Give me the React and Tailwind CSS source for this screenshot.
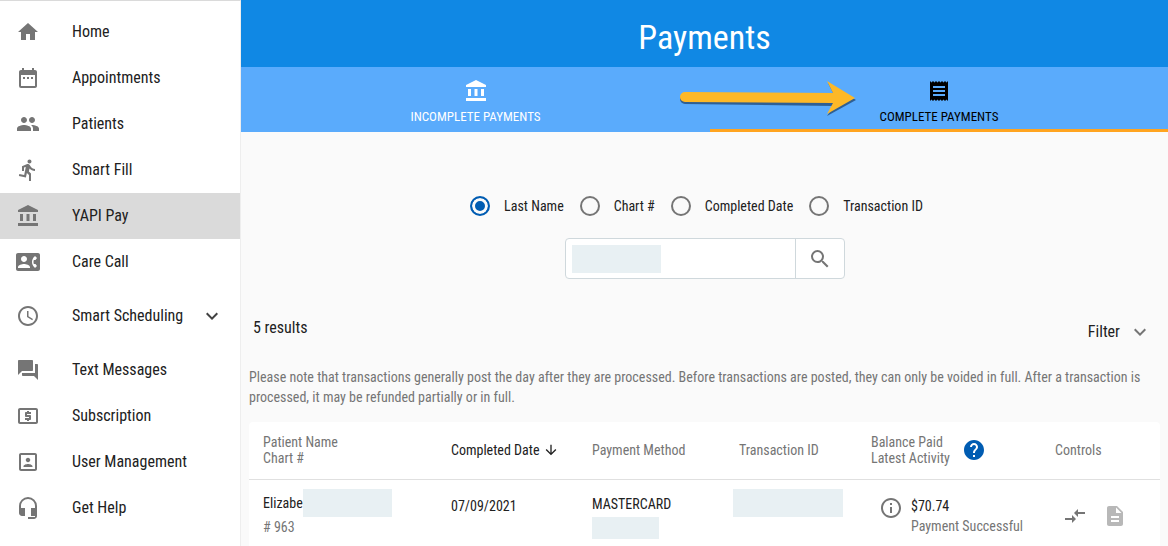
import React, { useState } from 'react'
import {
    MdHome, MdDateRange, MdPeople, MdDirectionsRun, MdAccountBalance, MdContactPhone, MdSchedule,
    MdForum, MdLocalAtm, MdPortrait, MdHeadsetMic, MdExpandMore, MdReceipt, MdSearch,
    MdArrowDownward, MdHelp, MdInfoOutline, MdCompareArrows, MdDescription
} from 'react-icons/md'

const menu = [
    { label: "Home", Icon: MdHome },
    { label: "Appointments", Icon: MdDateRange },
    { label: "Patients", Icon: MdPeople },
    { label: "Smart Fill", Icon: MdDirectionsRun },
    { label: "YAPI Pay", Icon: MdAccountBalance, active: true },
    { label: "Care Call", Icon: MdContactPhone },
    { label: "Smart Scheduling", Icon: MdSchedule, expandable: true },
    { label: "Text Messages", Icon: MdForum },
    { label: "Subscription", Icon: MdLocalAtm },
    { label: "User Management", Icon: MdPortrait },
    { label: "Get Help", Icon: MdHeadsetMic }
]

const searchFields = ["Last Name", "Chart #", "Completed Date", "Transaction ID"]

const MenuItem = ({label, Icon, active, expandable}) => {
    return (
        <li>
            <a href="#" className={`flex items-center pl-4 pr-4 text-base text-[#212121] ${expandable ? "h-[62px]" : "h-[46px]"} ${active ? "bg-[#dadada]" : ""}`}>
                <Icon className="size-6 shrink-0 text-[#757575]" />
                <span className="ml-8">{label}</span>
                {expandable ? <MdExpandMore className="ml-auto size-6 text-[#424242]" /> : null}
            </a>
        </li>
    )
}

const Sidebar = () => {
    return (
        <nav className="w-[241px] shrink-0 border-t border-r border-t-[#dadada] border-r-[#eeeeee] bg-white pt-2">
            <ul>
                {menu.map((item) => <MenuItem key={item.label} {...item} />)}
            </ul>
        </nav>
    )
}

const PointerArrow = () => {
    return (
        <svg className="absolute top-2 -left-8 h-12 w-[184px]" viewBox="0 0 184 48" aria-hidden="true">
            <path d="M7 19 L156 20 L150 8 L178 25 L149 41 L156 31 L7 29 A5 5 0 0 1 7 19 Z" fill="#1d3f66" opacity="0.7" />
            <path d="M7 17 L155 18 L149 6 L177 23 L149 39 L155 28 L7 27 A5 5 0 0 1 7 17 Z" fill="#fdb827" />
        </svg>
    )
}

const Tabs = () => {
    return (
        <div className="flex h-[65px] bg-[#5aabfc] text-[13px] leading-5">
            <button className="flex flex-[469] flex-col items-center pt-3 text-white">
                <MdAccountBalance className="size-6" />
                <span className="mt-1">INCOMPLETE PAYMENTS</span>
            </button>
            <button className="relative flex flex-[458] flex-col items-center border-b-3 border-[#ffa41f] pt-3 text-black">
                <PointerArrow />
                <MdReceipt className="size-6" />
                <span className="mt-1">COMPLETE PAYMENTS</span>
            </button>
        </div>
    )
}

// covers private patient data
const Hidden = ({className}) => <div className={`bg-[#e8f0f3] ${className}`} />

const Search = () => {
    const [field, setField] = useState("Last Name")
    const [query, setQuery] = useState("")

    return (
        <form onSubmit={(e) => e.preventDefault()} className="flex flex-col items-center pt-16">
            <div className="flex">
                {searchFields.map((name) => (
                    <label key={name} className="mr-4 flex items-center gap-3.5 text-sm text-[#212121]">
                        <input
                            type="radio"
                            name="field"
                            value={name}
                            checked={field === name}
                            onChange={(e) => setField(e.target.value)}
                            className="size-5 appearance-none rounded-full border-2 border-[#757575] checked:border-[#005cb2] checked:bg-[#005cb2] checked:shadow-[inset_0_0_0_3px_#fafafa]" />
                        {name}
                    </label>
                ))}
            </div>
            <div className="relative mt-[22px] flex h-[41px] w-[280px] rounded border border-[#cfd8dc] bg-white">
                <input type="text" aria-label="Search" value={query} onChange={(e) => setQuery(e.target.value)} className="min-w-0 flex-1 px-2 text-sm outline-none" />
                <Hidden className="absolute top-1.5 left-1.5 h-7 w-[89px]" />
                <button aria-label="Search" className="flex w-[49px] items-center justify-center border-l border-[#cfd8dc] text-[#757575]">
                    <MdSearch className="size-6" />
                </button>
            </div>
        </form>
    )
}

const PaymentsTable = () => {
    return (
        <table className="w-full table-fixed rounded-t bg-white text-left text-sm text-[#757575]">
            <colgroup>
                <col className="w-[188px]" />
                <col className="w-[141px]" />
                <col className="w-[147px]" />
                <col className="w-[132px]" />
                <col className="w-[184px]" />
                <col className="w-[119px]" />
            </colgroup>
            <thead>
                <tr className="h-[57px] border-b border-[#e0e0e0] leading-4">
                    <th className="pl-3.5 font-normal">Patient Name<br />Chart #</th>
                    <th className="pl-3.5 font-normal text-[#212121]">
                        <button className="flex items-center gap-1">Completed Date <MdArrowDownward className="size-4" /></button>
                    </th>
                    <th className="pl-3.5 font-normal">Payment Method</th>
                    <th className="pl-3.5 font-normal">Transaction ID</th>
                    <th className="pl-3.5 font-normal">
                        <div className="flex items-center gap-3">
                            <span>Balance Paid<br />Latest Activity</span>
                            <MdHelp className="size-6 text-[#005cb2]" />
                        </div>
                    </th>
                    <th className="pl-3.5 font-normal">Controls</th>
                </tr>
            </thead>
            <tbody>
                <tr className="h-[67px] align-top">
                    <td className="pt-[9px] pl-3.5">
                        <div className="flex items-center text-[#212121]">Elizabe<Hidden className="h-7 w-[89px]" /></div>
                        <div>#&nbsp;963</div>
                    </td>
                    <td className="pt-4 pl-3.5 text-[#212121]">07/09/2021</td>
                    <td className="pt-3.5 pl-3.5">
                        <div className="text-[#212121]">MASTERCARD</div>
                        <Hidden className="mt-[3px] h-[22px] w-[67px]" />
                    </td>
                    <td className="pt-[9px] pl-2"><Hidden className="h-7 w-[110px]" /></td>
                    <td className="pt-4 pl-[22px]">
                        <div className="flex gap-2">
                            <MdInfoOutline className="size-6 shrink-0" />
                            <div className="whitespace-nowrap">
                                <div className="text-[#212121]">$70.74</div>
                                <div>Payment Successful</div>
                            </div>
                        </div>
                    </td>
                    <td className="pt-6 pl-[22px]">
                        <div className="flex gap-4">
                            <button aria-label="Refund"><MdCompareArrows className="size-6" /></button>
                            <button aria-label="Receipt"><MdDescription className="size-6 text-[#b8b8b8]" /></button>
                        </div>
                    </td>
                </tr>
            </tbody>
        </table>
    )
}

const App = () => {
    return (
        <div className="flex min-h-screen bg-[#fafafa] font-['Roboto_Condensed','Liberation_Sans_Narrow',Roboto,sans-serif]">
            <Sidebar />
            <main className="min-w-0 flex-1">
                <h1 className="flex h-[67px] items-center justify-center bg-[#1088e4] pt-2 text-[34px] text-white">Payments</h1>
                <Tabs />
                <Search />
                <div className="px-2">
                    <div className="flex justify-between pt-[37px] pr-2 pl-1 text-base text-[#212121]">
                        <div>5 results</div>
                        <button className="mt-1 flex items-center gap-2">Filter <MdExpandMore className="size-6 text-[#757575]" /></button>
                    </div>
                    <p className="mt-[23px] mb-[15px] text-sm text-[#757575]">
                        Please note that transactions generally post the day after they are processed. Before transactions are posted, they can only be voided in full. After a transaction is processed, it may be refunded partially or in full.
                    </p>
                    <PaymentsTable />
                </div>
            </main>
        </div>
    )
}

export default App
